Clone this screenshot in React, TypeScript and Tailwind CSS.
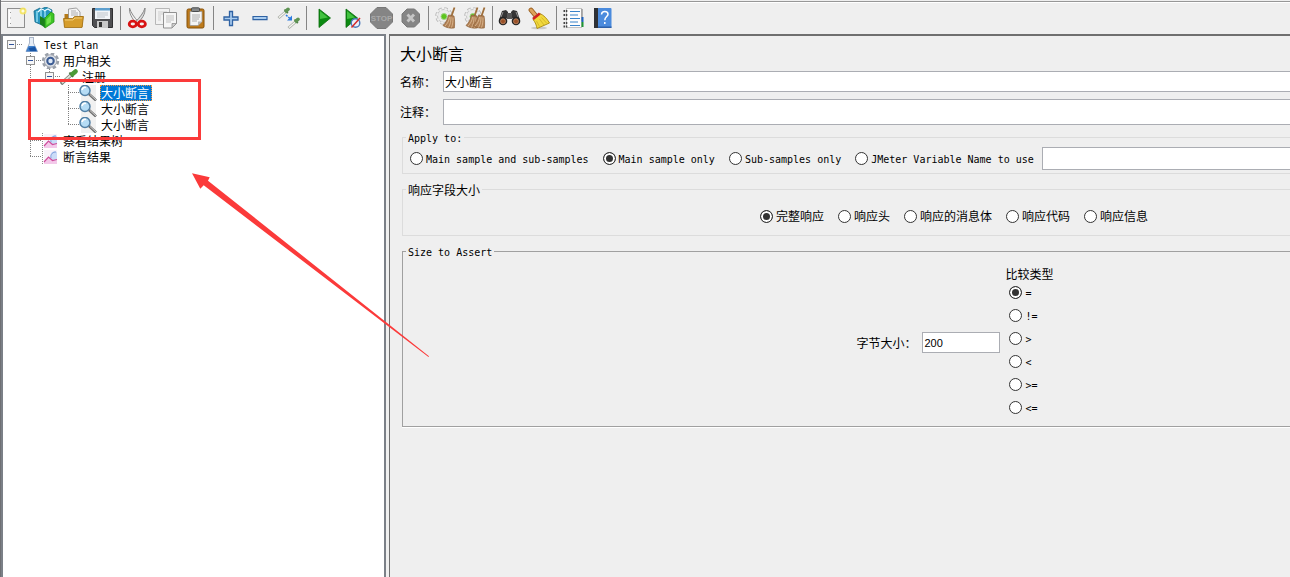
import React from 'react';

interface ToolItem {
  name: string;
  icon: React.ReactNode;
}

const Cog = () => (
  <g>
    <circle cx="10" cy="9" r="7" stroke="#b9b9b9" strokeWidth="3.600" strokeDasharray="3.200 2.300" />
    <circle cx="10" cy="9" r="6.500" fill="#ebebeb" stroke="#c4c4c4" />
    <circle cx="10" cy="9" r="7" stroke="#efefef" strokeWidth="1.800" strokeDasharray="2.600 2.900" strokeDashoffset="-.3" />
    <circle cx="10" cy="9.500" r="3" fill="#5cc41c" stroke="#9fd584" />
  </g>
);

const Broom = () => (
  <g>
    <path d="M20.500.500 17.500 9" stroke="#a0703c" strokeWidth="1.800" />
    <path d="M14.500 8l5.500 1c.7 4 .8 8 .3 12-5 .5-8.300-.5-11.300-2.500 3-3 4.500-6 5.500-10.500z" fill="#b08055" stroke="#8d6036" strokeWidth=".7" />
    <path d="M15.500 10c-.5 4-2 6.500-4.500 9M17 10c0 4-.7 7.500-2.500 10.500M19 10.500c0 4-.3 7-1.500 10" stroke="#dfbf98" strokeWidth=".8" />
  </g>
);

const Pipette = () => (
  <g>
    <path d="M.500 11 8 4.500" stroke="#a9ada5" strokeWidth="2.800" />
    <path d="M1 10.500 8 4.500" stroke="#f8f8f4" strokeWidth="1.200" />
    <path d="M6.500 2.500 9.800 6.200" stroke="#4e7c46" strokeWidth="1.800" />
    <path d="M8.200 4 10 2.300" stroke="#5d9352" strokeWidth="3.600" strokeLinecap="round" />
  </g>
);

const toolGroups: ToolItem[][] = [
  [
    {
      name: 'New',
      icon: (
        <>
          <rect x="3.500" y="1.500" width="17" height="19" fill="#f0f0f0" stroke="#8f8f8f" />
          <path d="M5.500 3v16" stroke="#fff" strokeWidth="2" />
          <path d="M6.500 5v1M6.500 10.500v1M6.500 16v1" stroke="#999" />
          <circle cx="19" cy="4" r="3.500" fill="#f5e45c" opacity=".9" />
          <circle cx="19" cy="4" r="1.600" fill="#fffde0" />
        </>
      ),
    },
    {
      name: 'Templates',
      icon: (
        <>
          <path d="M1 4 7 1l1 1 5-2 6 3-1 12-9 3-7-3z" fill="#2795bd" stroke="#14698b" strokeWidth=".8" />
          <path d="M4 4v11M8 3v14M12 3v7" stroke="#8edcf2" strokeWidth="1.500" />
          <path d="M5 5 8 2l3 1M11 4l4-2 3 2" stroke="#eefaff" fill="none" strokeWidth="1.200" />
          <path d="M7 9 12 12v9l-5-4z" fill="#1b801b" />
          <path d="M12 11 18 5l3 2v8l-9 6z" fill="#3fc525" stroke="#239716" strokeWidth=".8" />
          <path d="M13.500 12.500 18 8v7l-4.500 3z" fill="#73e14d" />
        </>
      ),
    },
    {
      name: 'Open',
      icon: (
        <>
          <path d="M2.500 7h5l1 2h12v11h-18z" fill="#b57a18" />
          <path d="M6.500 12V2l8-1 3.500 4v7z" fill="#f4f4f4" stroke="#8b8b8b" strokeWidth=".8" />
          <path d="M9 4h5M9 6h7M9 8h7" stroke="#b0b0b0" />
          <path d="M1.500 11.500h9l2-2h9l-1.500 11H2.500z" fill="#d69d2c" stroke="#a06d10" strokeWidth=".8" />
          <path d="M3 13h8l2-2h7" stroke="#f2cd75" fill="none" />
        </>
      ),
    },
    {
      name: 'Save',
      icon: (
        <>
          <path d="M1.500 1.500h20v19h-18l-2-2z" fill="#4f4f52" stroke="#2f2f31" />
          <rect x="4" y="1" width="15" height="11" fill="#f2f5f8" />
          <rect x="4" y="1" width="15" height="2.500" fill="#5d9fce" />
          <path d="M6 6h11M6 8h11M6 10h8" stroke="#bfc5cb" />
          <rect x="6" y="14" width="11" height="7" fill="#c9c9c9" />
          <rect x="8" y="15" width="3" height="5" fill="#333" />
        </>
      ),
    },
  ],
  [
    {
      name: 'Cut',
      icon: (
        <>
          <path d="M3.500 1c1.500 5 4.500 9 9 14l-2 1C6 12 3 6 3.500 1z" fill="#f1f1f1" stroke="#8c8c8c" />
          <path d="M19 1c-1.500 5-5 9-9.500 14l2 1c4.500-4 8-9 7.500-15z" fill="#dcdcdc" stroke="#858585" />
          <ellipse cx="6.800" cy="17" rx="3.600" ry="2.800" fill="#f4f4f4" stroke="#d81313" strokeWidth="2.800" />
          <ellipse cx="15.800" cy="17" rx="3.600" ry="2.800" fill="#f4f4f4" stroke="#d81313" strokeWidth="2.800" />
        </>
      ),
    },
    {
      name: 'Copy',
      icon: (
        <>
          <path d="M.5 1.500h14v16H.500z" fill="#f2f2f2" stroke="#b7b7b7" />
          <path d="M3 5h9M3 7h9M3 9h3M3 11h3M3 13h3" stroke="#cfcfcf" />
          <path d="M8.500 5.500h13v11l-4.500 4.500H8.500z" fill="#f6f6f6" stroke="#919191" />
          <path d="M21.500 16.500H17V21z" fill="#ccc" stroke="#919191" strokeWidth=".8" />
          <path d="M11 9h8M11 11h8M11 13h8M11 15h5" stroke="#c1c1c1" />
        </>
      ),
    },
    {
      name: 'Paste',
      icon: (
        <>
          <rect x="3" y="2" width="17" height="19" rx="1.500" fill="#bd7a1c" stroke="#855009" />
          <path d="M6 4.500h12v10l-4 4H6z" fill="#f5f5f5" stroke="#959595" strokeWidth=".7" />
          <path d="M18 14.500h-4v4z" fill="#b9b9b9" />
          <rect x="7.500" y=".8" width="8" height="3.700" rx="1" fill="#85888a" stroke="#4b4d4f" />
          <path d="M8 8h8M8 10h8M8 12h7M8 14h5" stroke="#aeaeae" />
        </>
      ),
    },
  ],
  [
    {
      name: 'Expand All',
      icon: <path d="M10.500 4.500h3v5.500h5.500v3h-5.500v5.500h-3V13H5v-3h5.500z" fill="#a9ccef" stroke="#2f62a3" strokeWidth="1.300" />,
    },
    {
      name: 'Collapse All',
      icon: <path d="M5 9.500h14v3.200H5z" fill="#a9ccef" stroke="#2f62a3" strokeWidth="1.200" />,
    },
    {
      name: 'Toggle',
      icon: (
        <>
          <g transform="translate(1 0)"><Pipette /></g>
          <g transform="translate(11 10)"><Pipette /></g>
          <path d="M9 8 13 11.500" stroke="#2d7be0" strokeWidth="1.500" strokeDasharray="2 1" />
          <path d="M15 8.500v5h-5z" fill="#2d7be0" />
        </>
      ),
    },
  ],
  [
    {
      name: 'Start',
      icon: (
        <>
          <path d="M7 2 18.500 11 7 20.500z" fill="#0c8a11" stroke="#0a6c0d" strokeWidth=".8" />
          <path d="M8 4 16 10.500 8 12z" fill="#43c240" />
        </>
      ),
    },
    {
      name: 'Start no pauses',
      icon: (
        <>
          <path d="M5 2 16.500 11 5 20.500z" fill="#0c8a11" stroke="#0a6c0d" strokeWidth=".8" />
          <path d="M6 4 14 10.500 6 12z" fill="#43c240" />
          <circle cx="14.500" cy="16" r="4.300" fill="#e8effa" stroke="#4a78ba" strokeWidth="1.400" />
          <path d="M10.500 20.500 19 11" stroke="#d42a2a" strokeWidth="1.500" />
        </>
      ),
    },
    {
      name: 'Stop',
      icon: (
        <>
          <path d="M7 .5h9l6.500 6.500v8L16 21.500H7L.5 15V7z" fill="#858585" stroke="#787878" />
          <text x="11.500" y="14" textAnchor="middle" fontFamily="Liberation Sans, sans-serif" fontSize="8" fontWeight="700" fill="#a9a9a9">STOP</text>
        </>
      ),
    },
    {
      name: 'Shutdown',
      icon: (
        <>
          <path d="M8 2h7.500l5 5v8l-5 5H8l-5-5V7z" fill="#858585" stroke="#787878" />
          <path d="M8.500 7.500 15 14.500M15 7.500 8.500 14.500" stroke="#c6c6c6" strokeWidth="2.800" />
        </>
      ),
    },
  ],
  [
    { name: 'Clear', icon: <><Cog /><Broom /></> },
    {
      name: 'Clear All',
      icon: (
        <>
          <Cog />
          <g transform="translate(-6 0)"><Broom /></g>
          <g transform="translate(1 0)"><Broom /></g>
        </>
      ),
    },
  ],
  [
    {
      name: 'Search',
      icon: (
        <>
          <path d="M4 4 8 3l2 2v6L1 13z" fill="#343434" />
          <path d="M19 4 15 3l-2 2v6l9 2z" fill="#343434" />
          <rect x="9" y="6" width="5" height="6" fill="#555" />
          <path d="M5 5 3 10M18 5l2 5" stroke="#929292" />
          <circle cx="5" cy="14" r="4.300" fill="#242424" />
          <circle cx="18" cy="14" r="4.300" fill="#242424" />
          <circle cx="5" cy="14.300" r="2.500" fill="#9b5128" stroke="#c38b68" strokeWidth=".8" />
          <circle cx="18" cy="14.300" r="2.500" fill="#9b5128" stroke="#c38b68" strokeWidth=".8" />
        </>
      ),
    },
    {
      name: 'Reset Search',
      icon: (
        <>
          <ellipse cx="12" cy="21" rx="8" ry="1.300" fill="#c9c9c9" />
          <path d="M4 3 9 9" stroke="#9b6020" strokeWidth="4.800" strokeLinecap="round" />
          <path d="M4 3 9 9" stroke="#dda25c" strokeWidth="3" strokeLinecap="round" />
          <path d="M6 12.500 13 6.500c4 2 7 5 9.500 9.500L10 21.500c-.5-3-1.500-6-4-9z" fill="#f1d83c" stroke="#a98a10" strokeWidth=".9" />
          <path d="M9.500 14l3 5.500M12.500 12l4.500 6M14.500 10.500l5 5.500" stroke="#c9ab22" strokeWidth=".7" />
          <path d="M6 12 12.800 6.500" stroke="#cf2222" strokeWidth="2.700" />
        </>
      ),
    },
  ],
  [
    {
      name: 'Function Helper',
      icon: (
        <>
          <rect x="4.500" y="1.500" width="15" height="19" fill="#fdfdfd" stroke="#c2c2c2" />
          <path d="M20 2v12" stroke="#999" strokeWidth="1.500" />
          <path d="M20.500 10v5" stroke="#1d62c0" strokeWidth="2" />
          <path d="M20.500 15v5" stroke="#1d9433" strokeWidth="2" />
          <path d="M8 4.500h10M8 8h8M8 11.500h10M8 15h8M8 18.500h10" stroke="#3a83c9" strokeWidth="1.200" />
          <path d="M1.500 4h4M1.500 8h4M1.500 12h4M1.500 16h4M1.500 19.500h4" stroke="#444" strokeWidth="1.800" strokeDasharray="1.500 .8" />
        </>
      ),
    },
    {
      name: 'Help',
      icon: (
        <>
          <rect x="3" y="1" width="17.500" height="20" rx="1" fill="#4b8bdd" />
          <path d="M3 1h4v20H3z" fill="#2e3136" />
          <path d="M7 19.500h13.500V21H7z" fill="#2c5fa8" />
          <path d="M10.500 7.500c.3-4.200 6.500-3.700 6.500-.3 0 2.300-3.200 2.500-3.200 6M13.800 15v2" fill="none" stroke="#fff" strokeWidth="1.500" />
        </>
      ),
    },
  ],
];

const Toolbar = () => (
  <div role="toolbar" className="mt-px flex h-[33px] shrink-0 items-center border-t border-[#979797] bg-[#efefef] shadow-[inset_0_1px_0_#ffffff]">
    {toolGroups.map((group, groupIndex) => (
      <React.Fragment key={groupIndex}>
        {groupIndex > 0 && (
          <div className="flex w-[6px] shrink-0 justify-center">
            <div className="h-6 w-px bg-[#858585]"></div>
          </div>
        )}
        {group.map(item => (
          <button key={item.name} type="button" aria-label={item.name} className="flex w-[29px] shrink-0 justify-center">
            <svg className="size-[23px]" viewBox="0 0 23 23" fill="none">
              {item.icon}
            </svg>
          </button>
        ))}
      </React.Fragment>
    ))}
  </div>
);

type IconKind = 'plan' | 'group' | 'sampler' | 'assertion' | 'listener';
type Guide = 'blank' | 'line' | 'open' | 'rootOpen' | 'lastOpen' | 'leaf' | 'lastLeaf';

interface TreeRow {
  label: string;
  icon: IconKind;
  guides: Guide[];
  selected?: boolean;
  latin?: boolean;
}

const treeIcons: Record<IconKind, React.ReactNode> = {
  plan: (
    <>
      <path d="M7 .500h5M7.500 0v6L4 14.500h11.500L11.500 6V0" fill="#e6edf6" stroke="#a9b5c8" />
      <path d="M6.500 9h6.500l2.500 5.500H4z" fill="#3f7fcb" />
      <path d="M6.500 11 13 10l1.500 4H8z" fill="#1754a4" />
    </>
  ),
  group: (
    <>
      <circle cx="9.500" cy="8" r="7.200" stroke="#9aa0a9" strokeWidth="3" strokeDasharray="3.400 2.250" />
      <circle cx="9.500" cy="8" r="6.300" fill="#c6cad1" stroke="#a5aab3" />
      <circle cx="9.500" cy="8" r="5" stroke="#e4e7ec" />
      <circle cx="9.500" cy="8" r="3.200" fill="#dfe9f6" stroke="#3c5c94" strokeWidth="2" />
    </>
  ),
  sampler: (
    <>
      <path d="M1 15 11 6" stroke="#777b74" strokeWidth="3.500" />
      <path d="M2 14 11 6" stroke="#dce2d9" strokeWidth="1.800" />
      <path d="M9.500 3.500 13 8" stroke="#3c6b32" strokeWidth="2" />
      <path d="M12.500 5 15.500 2.500" stroke="#4b9a36" strokeWidth="4.500" strokeLinecap="round" />
    </>
  ),
  assertion: (
    <>
      <rect x="2" width="15" height="16" fill="#f1f1f1" />
      <path d="M10 9 17 15.500" stroke="#6c6c6c" strokeWidth="2.500" />
      <path d="M11 9.500 17 15" stroke="#ccc" />
      <circle cx="6" cy="5.500" r="5" fill="#b5dcf5" stroke="#517fa5" strokeWidth="1.500" />
      <path d="M3 5c.5-2 2-3 4-2.500" stroke="#fff" strokeWidth="1.500" />
    </>
  ),
  listener: (
    <>
      <path d="M1.500 0v16" stroke="#8c8c8c" strokeDasharray="1 1" />
      <rect x="3" y="1" width="13" height="14" fill="#f8f2fa" />
      <path d="M10 4l3-2 3 1v8l-6 1z" fill="#cbdcf8" />
      <path d="M3 13 8 8l4 4 4-1v4H3z" fill="#f3c9ea" />
      <path d="M3 13 7.500 8l4 3.500L16 10.500" stroke="#cf4c9c" strokeWidth="1.200" />
      <path d="M10 9c-1-4 2-6 5-6" stroke="#7a9bdc" />
    </>
  ),
};

const rows: TreeRow[] = [
  { label: 'Test Plan', icon: 'plan', guides: ['rootOpen'], latin: true },
  { label: '用户相关', icon: 'group', guides: ['blank', 'open'] },
  { label: '注册', icon: 'sampler', guides: ['blank', 'line', 'lastOpen'] },
  { label: '大小断言', icon: 'assertion', guides: ['blank', 'line', 'blank', 'leaf'], selected: true },
  { label: '大小断言', icon: 'assertion', guides: ['blank', 'line', 'blank', 'leaf'] },
  { label: '大小断言', icon: 'assertion', guides: ['blank', 'line', 'blank', 'lastLeaf'] },
  { label: '察看结果树', icon: 'listener', guides: ['blank', 'leaf'] },
  { label: '断言结果', icon: 'listener', guides: ['blank', 'lastLeaf'] },
];

// One 19px indent cell: dotted connectors plus the collapse handle
const GuideCell = ({ kind }: { kind: Guide }) => {
  const hasHandle = kind === 'open' || kind === 'rootOpen' || kind === 'lastOpen';
  const down = kind === 'line' || kind === 'open' || kind === 'leaf';
  const up = down || kind === 'lastOpen' || kind === 'lastLeaf';
  return (
    <svg className="h-4 w-[19px] shrink-0" viewBox="0 0 19 16" fill="none" stroke="#808080" shapeRendering="crispEdges">
      {up && <path d="M8.500 0v8" strokeDasharray="1 1" />}
      {down && <path d="M8.500 8v8" strokeDasharray="1 1" />}
      {kind !== 'blank' && kind !== 'line' && <path d="M8 7.500h11" strokeDasharray="1 1" />}
      {hasHandle && (
        <>
          <rect x="4.500" y="3.500" width="8" height="8" fill="#f7f7f7" stroke="#919191" />
          <path d="M6 7.500h5" stroke="#31549c" />
        </>
      )}
    </svg>
  );
};

const TestTree = () => (
  <div role="tree" className="w-[385px] shrink-0 border-t-2 border-r-2 border-l-2 border-[#7b8087] bg-white pt-px">
    {rows.map((row, index) => (
      <div key={index} role="treeitem" aria-selected={!!row.selected} className="flex h-4 items-center">
        {row.guides.map((guide, guideIndex) => (
          <GuideCell key={guideIndex} kind={guide} />
        ))}
        <svg className="h-4 w-[19px] shrink-0" viewBox="0 0 19 16" fill="none">
          {treeIcons[row.icon]}
        </svg>
        <span
          className={
            row.selected
              ? 'ml-0.5 h-4 border border-dotted border-[#ff9a3c] bg-[#0078d7] pr-0.5 leading-4 text-white'
              : row.latin
                ? 'ml-[3px] h-4 text-[10px] leading-[18px]'
                : 'ml-[3px] h-4 leading-[18px]'
          }
        >
          {row.label}
        </span>
      </div>
    ))}
  </div>
);

interface RadioProps {
  group: string;
  label: string;
  checked?: boolean;
  latin?: boolean;
}

const Radio = ({ group, label, checked, latin }: RadioProps) => (
  <label className="flex shrink-0 items-center gap-[3px] whitespace-nowrap">
    <input
      type="radio"
      name={group}
      defaultChecked={checked}
      className="size-[13px] shrink-0 appearance-none rounded-full border border-[#333333] bg-white checked:bg-[#333333] checked:shadow-[inset_0_0_0_2px_#ffffff]"
    />
    <span className={latin ? 'h-4 text-[10px] leading-[18px]' : 'h-4 leading-[18px]'}>{label}</span>
  </label>
);

const sampleScopes = ['Main sample and sub-samples', 'Main sample only', 'Sub-samples only', 'JMeter Variable Name to use'];
const responseFields = ['完整响应', '响应头', '响应的消息体', '响应代码', '响应信息'];
const comparisons = ['=', '!=', '>', '<', '>=', '<='];

const SizeAssertionPanel = () => (
  <main className="ml-[3px] min-w-0 flex-1 overflow-hidden border-t-2 border-l border-[#6f6f6f] bg-[#efefef]">
    {/* The form is wider than its viewport, so its right part is clipped */}
    <form className="w-[124%] pt-[6px] pl-[10px]">
      <h1 className="h-6 text-[16px] leading-[26px]">大小断言</h1>
      <div className="mt-[5px] flex items-center">
        <label htmlFor="name" className="h-4 w-[43px] shrink-0 leading-[18px]">名称：</label>
        <input id="name" defaultValue="大小断言" className="h-[21px] min-w-0 flex-1 border border-[#abadb3] bg-white px-px" />
      </div>
      <div className="mt-[7px] flex items-center">
        <label htmlFor="comment" className="h-4 w-[43px] shrink-0 leading-[18px]">注释：</label>
        <input id="comment" className="h-[26px] min-w-0 flex-1 border border-[#abadb3] bg-white px-px" />
      </div>

      <fieldset className="mt-1 ml-0.5 border border-[#dcdcdc] pb-[3px]">
        <legend className="ml-[3px] h-4 px-0.5 text-[10px] leading-5">Apply to:</legend>
        <div className="flex items-center gap-3.5 pt-0.5 pl-[7px]">
          {sampleScopes.map((scope, index) => (
            <Radio key={scope} group="scope" label={scope} checked={index === 1} latin />
          ))}
          <input aria-label="JMeter Variable Name" className="-ml-1.5 h-[23px] min-w-0 flex-1 border border-[#abadb3] bg-white px-px" />
        </div>
      </fieldset>

      <fieldset className="mt-[7px] ml-0.5 border border-[#dcdcdc] py-[11px]">
        <legend className="ml-[3px] h-4 px-0.5 leading-5">响应字段大小</legend>
        <div className="flex justify-center gap-3.5">
          {responseFields.map((field, index) => (
            <Radio key={field} group="field" label={field} checked={index === 0} />
          ))}
        </div>
      </fieldset>

      <fieldset className="mt-[7px] ml-0.5 border border-[#a0a0a0] py-[7px] shadow-[0_1px_0_#ffffff]">
        <legend className="ml-[3px] h-4 px-0.5 text-[10px] leading-5">Size to Assert</legend>
        <div className="flex items-center justify-center pl-0.5">
          <label htmlFor="size" className="h-4 w-[66px] shrink-0 leading-[18px]">字节大小：</label>
          <input
            id="size"
            defaultValue="200"
            className="h-[21px] w-[78px] border border-[#abadb3] bg-white px-px font-['Liberation_Sans',sans-serif] text-[11px]"
          />
          <div className="ml-[5px]">
            <div className="h-[15px] leading-[18px]">比较类型</div>
            {comparisons.map((comparison, index) => (
              <div key={comparison} className="flex h-[23px] items-center pl-1">
                <Radio group="comparison" label={comparison} checked={index === 0} latin />
              </div>
            ))}
          </div>
        </div>
      </fieldset>
    </form>
  </main>
);

const Annotations = () => (
  <>
    <div className="pointer-events-none absolute top-[79px] left-[27px] h-[61px] w-[173px] border-[3px] border-[#fb3a3a]"></div>
    <svg className="pointer-events-none absolute top-[170px] left-[189px] h-[190px] w-[240px]" viewBox="0 0 240 190">
      <path d="M2 3.300 19.700 7.300 18 10.700 239 186.200 238.500 187 13.700 15.300 10.300 18.700z" fill="#fb3a3a" />
    </svg>
  </>
);

const App = () => (
  <div className="relative flex h-screen flex-col overflow-hidden border-l border-[#6f7074] bg-[#efefef] font-['DejaVu_Sans_Mono','Noto_Sans_CJK_SC',monospace] text-[12px] text-black">
    <Toolbar />
    <div className="flex min-h-0 flex-1">
      <TestTree />
      <SizeAssertionPanel />
    </div>
    <Annotations />
  </div>
);

export default App;
